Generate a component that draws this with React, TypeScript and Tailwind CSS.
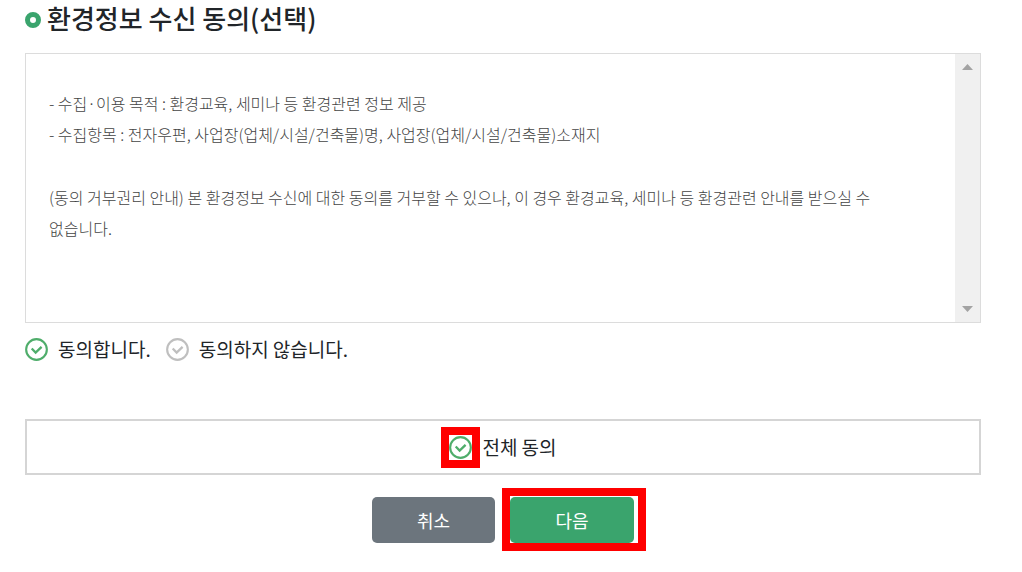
import { useState } from "react";

function CheckIcon({ active }: { active: boolean }) {
  return (
    <svg
      width="23"
      height="23"
      viewBox="0 0 24 24"
      fill="none"
      aria-hidden="true"
      className={active ? "shrink-0 text-[#4fad6b]" : "shrink-0 text-[#bfbfbf]"}
    >
      <circle cx="12" cy="12" r="10.8" stroke="currentColor" strokeWidth="2.2" />
      <path d="M7 11l4.1 4.2 6.2-6" stroke="currentColor" strokeWidth="2.4" />
    </svg>
  );
}

function ScrollArrow({ direction }: { direction: "up" | "down" }) {
  return (
    <button type="button" aria-label={direction === "up" ? "위로" : "아래로"} className="flex h-[26px] w-full items-center justify-center">
      <svg width="11" height="6" viewBox="0 0 11 6" fill="#a3a3a3" aria-hidden="true">
        <path d={direction === "up" ? "M5.5 0L11 6H0z" : "M0 0h11L5.5 6z"} />
      </svg>
    </button>
  );
}

export default function App() {
  const [agree, setAgree] = useState(true);
  const [all, setAll] = useState(true);

  return (
    <main className="bg-white pr-[41px] pb-7 pl-[25px] font-['Noto_Sans_CJK_KR','Noto_Sans',sans-serif] text-[#212529]">
      <h2 className="flex h-[53px] items-start gap-[6px] text-[26px] leading-[36px] font-medium">
        <span className="mt-3 size-4 shrink-0 rounded-full border-5 border-[#3aa46d]" />
        환경정보 수신 동의(선택)
      </h2>

      <section className="flex h-[270px] border border-[#dcdcdc]">
        <div className="flex-1 pt-[34px] pr-12 pl-[23px] text-base leading-[31px] font-light break-keep text-[#444]">
          <p>- 수집·이용 목적 : 환경교육, 세미나 등 환경관련 정보 제공</p>
          <p>- 수집항목 : 전자우편, 사업장(업체/시설/건축물)명, 사업장(업체/시설/건축물)소재지</p>
          <p className="mt-8">
            (동의 거부권리 안내) 본 환경정보 수신에 대한 동의를 거부할 수 있으나, 이 경우 환경교육, 세미나 등 환경관련 안내를 받으실 수
            없습니다.
          </p>
        </div>
        <div className="flex w-[25px] flex-col justify-between bg-[#f0f0f0]">
          <ScrollArrow direction="up" />
          <ScrollArrow direction="down" />
        </div>
      </section>

      <div className="mt-3 flex items-center gap-[15px] text-[19px] leading-[28px]">
        <label className="flex items-center gap-[10px]">
          <input type="radio" name="agree" className="sr-only" checked={agree} onChange={() => setAgree(true)} />
          <CheckIcon active={agree} />
          동의합니다.
        </label>
        <label className="flex items-center gap-[10px]">
          <input type="radio" name="agree" className="sr-only" checked={!agree} onChange={() => setAgree(false)} />
          <CheckIcon active={!agree} />
          동의하지 않습니다.
        </label>
      </div>

      <div className="mt-14 flex h-14 items-center justify-center border-2 border-[#d5d5d5]">
        <label className="flex items-center gap-[10px] text-[19px] leading-[28px]">
          <input type="checkbox" className="sr-only" checked={all} onChange={(e) => setAll(e.target.checked)} />
          <span className="relative">
            <CheckIcon active={all} />
            <span className="absolute -inset-x-2 -inset-y-[9px] border-8 border-[#ff0000]" />
          </span>
          전체 동의
        </label>
      </div>

      <div className="mt-[22px] flex justify-center gap-[15px] text-lg text-white">
        <button type="button" className="h-[46px] w-[123px] rounded-[5px] bg-[#6c757d]">
          취소
        </button>
        <div className="relative">
          <button type="button" className="h-[46px] w-[124px] rounded-[5px] bg-[#3aa46d]">
            다음
          </button>
          {/* highlight frame */}
          <span className="pointer-events-none absolute -top-[9px] -right-3 -bottom-2 -left-2 border-8 border-[#ff0000]" />
        </div>
      </div>
    </main>
  );
}
